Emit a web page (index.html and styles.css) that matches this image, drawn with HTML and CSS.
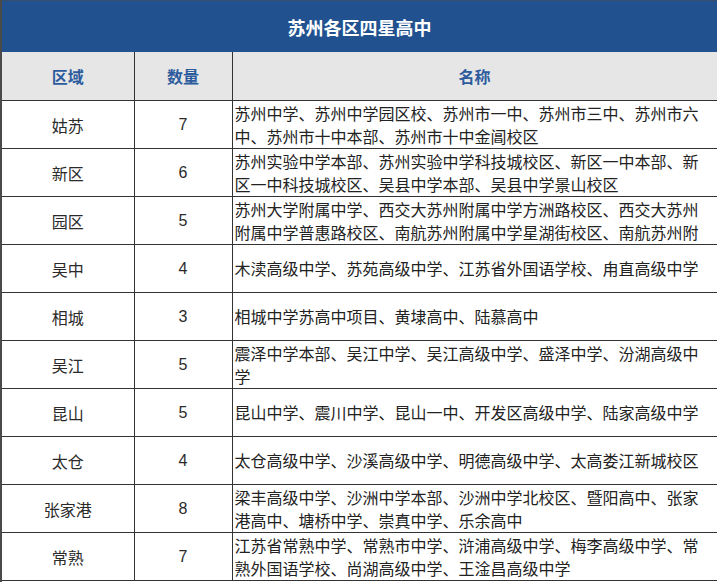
FILE: index.html
```html
<!DOCTYPE html>
<html lang="zh">
<head>
<meta charset="utf-8">
<title>苏州各区四星高中</title>
<link rel="stylesheet" href="styles.css">
</head>
<body>
<div class="sheet">
  <div class="title">苏州各区四星高中</div>
  <table class="grid">
    <colgroup><col class="c1"><col class="c2"><col class="c3"></colgroup>
    <thead>
      <tr><th>区域</th><th>数量</th><th>名称</th></tr>
    </thead>
    <tbody>
      <tr><td class="area">姑苏</td><td class="num">7</td><td class="names"><div class="clip">苏州中学、苏州中学园区校、苏州市一中、苏州市三中、苏州市六中、苏州市十中本部、苏州市十中金阊校区</div></td></tr>
      <tr><td class="area">新区</td><td class="num">6</td><td class="names"><div class="clip">苏州实验中学本部、苏州实验中学科技城校区、新区一中本部、新区一中科技城校区、吴县中学本部、吴县中学景山校区</div></td></tr>
      <tr><td class="area">园区</td><td class="num">5</td><td class="names"><div class="clip">苏州大学附属中学、西交大苏州附属中学方洲路校区、西交大苏州附属中学普惠路校区、南航苏州附属中学星湖街校区、南航苏州附</div></td></tr>
      <tr><td class="area">吴中</td><td class="num">4</td><td class="names"><div class="clip">木渎高级中学、苏苑高级中学、江苏省外国语学校、甪直高级中学</div></td></tr>
      <tr><td class="area">相城</td><td class="num">3</td><td class="names"><div class="clip">相城中学苏高中项目、黄埭高中、陆慕高中</div></td></tr>
      <tr><td class="area">吴江</td><td class="num">5</td><td class="names"><div class="clip">震泽中学本部、吴江中学、吴江高级中学、盛泽中学、汾湖高级中学</div></td></tr>
      <tr><td class="area">昆山</td><td class="num">5</td><td class="names"><div class="clip">昆山中学、震川中学、昆山一中、开发区高级中学、陆家高级中学</div></td></tr>
      <tr><td class="area">太仓</td><td class="num">4</td><td class="names"><div class="clip">太仓高级中学、沙溪高级中学、明德高级中学、太高娄江新城校区</div></td></tr>
      <tr><td class="area">张家港</td><td class="num">8</td><td class="names"><div class="clip">梁丰高级中学、沙洲中学本部、沙洲中学北校区、暨阳高中、张家港高中、塘桥中学、崇真中学、乐余高中</div></td></tr>
      <tr><td class="area">常熟</td><td class="num">7</td><td class="names"><div class="clip">江苏省常熟中学、常熟市中学、浒浦高级中学、梅李高级中学、常熟外国语学校、尚湖高级中学、王淦昌高级中学</div></td></tr>
    </tbody>
  </table>
</div>
</body>
</html>
```

FILE: styles.css
```css
html, body {
  margin: 0;
  padding: 0;
  background: #ffffff;
}
body {
  font-family: "Liberation Sans", "Noto Sans CJK SC", sans-serif;
  color: #222;
}
.sheet {
  width: 717px;
  height: 582px;
  box-sizing: border-box;
  border-left: 2px solid #4a4a4a;
  overflow: hidden;
}
.title {
  height: 52px;
  background: #21528f;
  color: #ffffff;
  font-family: "Noto Sans CJK SC", sans-serif;
  font-weight: 700;
  font-size: 18px;
  display: flex;
  align-items: center;
  justify-content: center;
  border-top: 1px solid #36506e;
  box-sizing: border-box;
}
.grid {
  width: 715px;
  border-collapse: collapse;
  table-layout: fixed;
}
.c1 { width: 132px; }
.c2 { width: 98px; }
.c3 { width: 485px; }
.grid th, .grid td {
  border: 1px solid #333;
  padding: 0;
}
.grid tr:first-child th { border-top: none; }
.grid tr th:first-child, .grid tr td:first-child { border-left: none; }
.grid th {
  height: 48px;
  background: #e6e6e6;
  color: #2d5c9e;
  font-family: "Noto Sans CJK SC", sans-serif;
  font-weight: 700;
  font-size: 16px;
  text-align: center;
}
.grid td {
  height: 47px;
  font-size: 16px;
}
.area {
  text-align: center;
  font-family: "Noto Sans CJK SC", sans-serif;
  color: #2a2a2a;
}
.num {
  text-align: center;
  font-size: 17px;
  color: #2a2a2a;
}
.names {
  text-align: left;
  vertical-align: top;
}
.clip {
  font-family: "Noto Sans CJK SC", sans-serif;
  font-size: 16px;
  line-height: 23px;
  height: 47px;
  overflow: hidden;
  padding: 0 12px 0 2px;
  box-sizing: border-box;
  display: flex;
  align-items: center;
}
```
